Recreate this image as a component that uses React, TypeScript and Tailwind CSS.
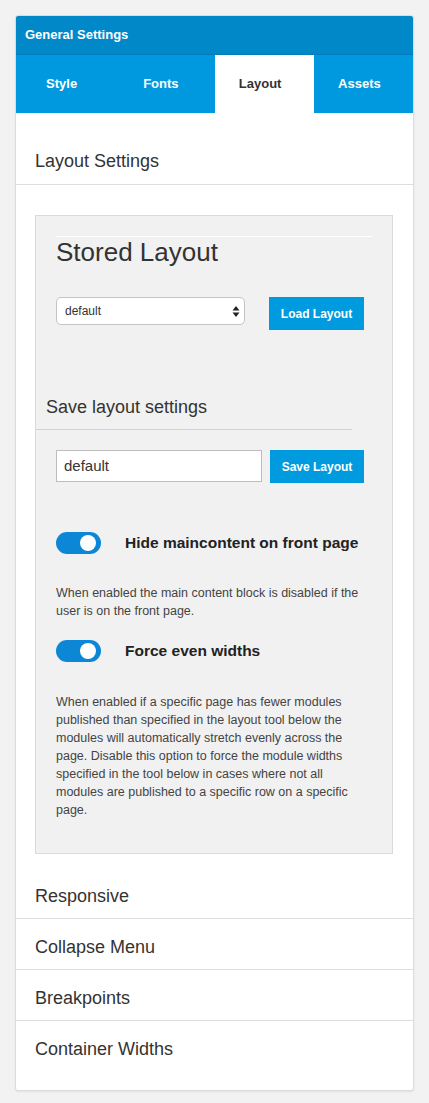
import React from "react";

const font = { fontFamily: '"Liberation Sans", Arial, Helvetica, sans-serif' };

function Toggle() {
  return (
    <div className="relative w-[45px] h-[22px] rounded-full bg-[#0b87d6] shrink-0">
      <div className="absolute top-[3px] right-[5px] w-[16px] h-[16px] rounded-full bg-white" />
    </div>
  );
}

export default function App() {
  return (
    <div className="min-h-screen bg-[#f2f2f2] pt-[15px] pl-[15px]" style={font}>
      <div className="w-[399px] bg-white border border-[#dcdcdc] rounded-[3px] shadow-[0_1px_2px_rgba(0,0,0,0.08)] overflow-hidden">
        <div className="h-[39px] bg-[#0088c8] border-b border-[#007dba] flex items-center pl-[9px] text-white text-[13px] leading-[16px] font-bold">
          General Settings
        </div>
        <div className="h-[58px] bg-[#0099df] grid grid-cols-4 text-[13px] leading-[16px] font-bold">
          <div className="flex items-center justify-center pr-[8px] text-white">Style</div>
          <div className="flex items-center justify-center pr-[8px] text-white">Fonts</div>
          <div className="flex items-center justify-center pr-[8px] bg-white text-[#333]">Layout</div>
          <div className="flex items-center justify-center pr-[8px] text-white">Assets</div>
        </div>

        <div className="pt-[36px] pb-[11px] pl-[19px] text-[18px] leading-[24px] text-[#333] border-b border-[#dedede]">
          Layout Settings
        </div>

        <div className="mt-[30px] ml-[19px] w-[358px] bg-[#f1f1f1] border border-[#dadada] pb-[34px]">
          <div className="mt-[20px] ml-[20px] w-[316px] h-px bg-white" />
          <div className="pl-[20px] text-[26px] leading-[30px] text-[#333]">Stored Layout</div>
          <div className="mt-[30px] pl-[20px] flex items-start gap-[24px] h-[33px]">
            <div className="relative w-[189px] h-[28px] bg-white border border-[#c4c4c4] rounded-[5px] flex items-center pl-[8px] text-[12px] leading-[14px] text-[#333]">
              default
              <svg className="absolute right-[4px] top-[8px]" width="8" height="11" viewBox="0 0 8 11">
                <path d="M4 0 L7.5 4.5 L0.5 4.5 Z" fill="#222" />
                <path d="M4 11 L7.5 6.5 L0.5 6.5 Z" fill="#222" />
              </svg>
            </div>
            <div className="w-[95px] h-[33px] bg-[#009ade] text-white text-[12px] leading-[14px] font-bold flex items-center justify-center">
              Load Layout
            </div>
          </div>

          <div className="mt-[65px] pl-[10px] text-[18px] leading-[24px] text-[#333]">Save layout settings</div>
          <div className="mt-[10px] w-[316px] h-px bg-[#d2d2d2]" />
          <div className="mt-[20px] pl-[20px] flex items-start gap-[8px] h-[33px]">
            <div className="w-[206px] h-[32px] bg-white border border-[#bdbdbd] flex items-center pl-[7px] text-[15px] leading-[18px] text-[#333]">
              default
            </div>
            <div className="w-[94px] h-[33px] bg-[#009ade] text-white text-[12px] leading-[14px] font-bold flex items-center justify-center">
              Save Layout
            </div>
          </div>

          <div className="mt-[49px] pl-[20px] flex items-center gap-[24px] h-[22px]">
            <Toggle />
            <div className="text-[15.5px] leading-[18px] font-bold text-[#222]">Hide maincontent on front page</div>
          </div>
          <p className="mt-[30px] ml-[20px] w-[316px] text-[12.5px] leading-[18px] text-[#444]">
            When enabled the main content block is disabled if the user is on the front page.
          </p>

          <div className="mt-[20px] pl-[20px] flex items-center gap-[24px] h-[22px]">
            <Toggle />
            <div className="text-[15.5px] leading-[18px] font-bold text-[#222]">Force even widths</div>
          </div>
          <p className="mt-[31px] ml-[20px] w-[316px] text-[12.5px] leading-[18px] text-[#444]">
            When enabled if a specific page has fewer modules published than specified in the layout tool below the modules will automatically stretch evenly across the page. Disable this option to force the module widths specified in the tool below in cases where not all modules are published to a specific row on a specific page.
          </p>
        </div>

        <div className="pt-[30px] pb-[10px] pl-[19px] text-[18px] leading-[24px] text-[#333] border-b border-[#dedede]">
          Responsive
        </div>
        <div className="pt-[16px] pb-[10px] pl-[19px] text-[18px] leading-[24px] text-[#333] border-b border-[#dedede]">
          Collapse Menu
        </div>
        <div className="pt-[16px] pb-[10px] pl-[19px] text-[18px] leading-[24px] text-[#333] border-b border-[#dedede]">
          Breakpoints
        </div>
        <div className="pt-[16px] pb-[29px] pl-[19px] text-[18px] leading-[24px] text-[#333]">
          Container Widths
        </div>
      </div>
    </div>
  );
}
